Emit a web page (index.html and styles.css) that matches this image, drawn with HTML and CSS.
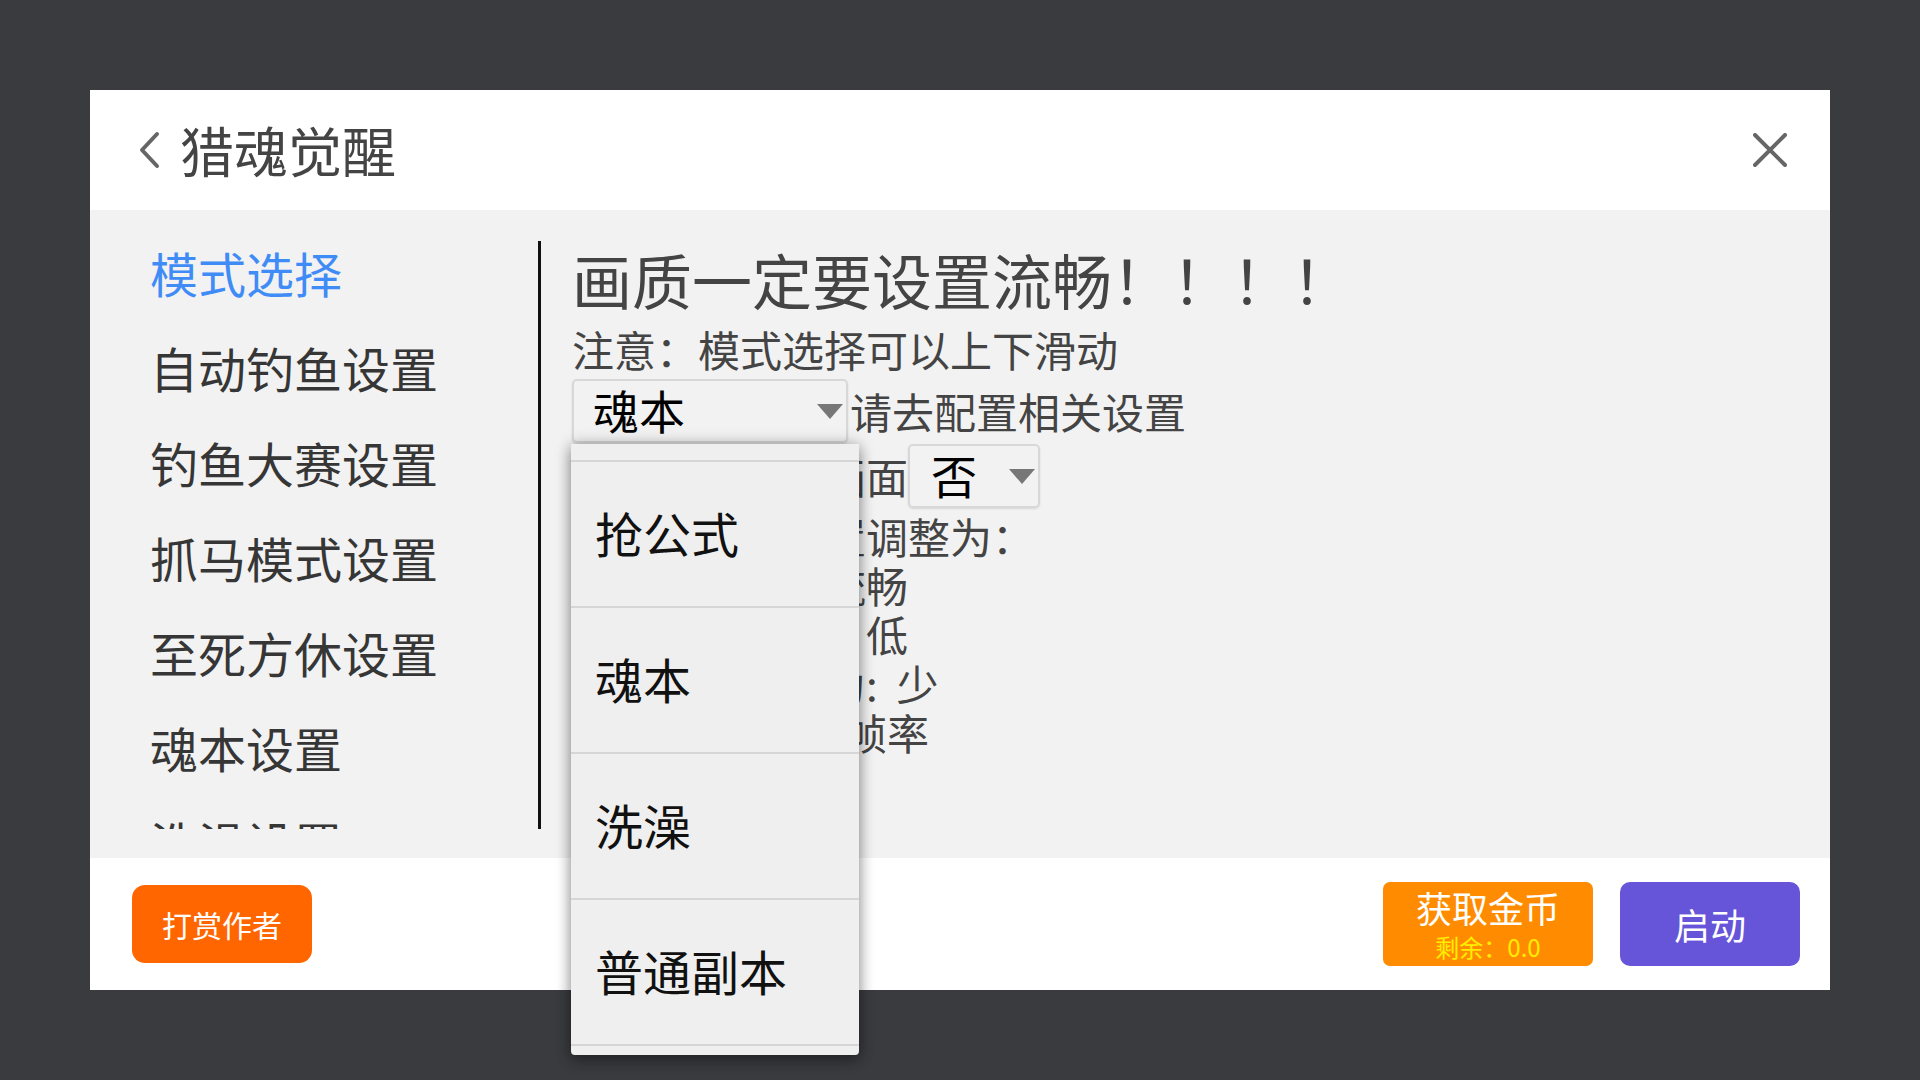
FILE: index.html
```html
<!DOCTYPE html>
<html lang="zh-CN">
<head>
<meta charset="utf-8">
<title>猎魂觉醒</title>
<link rel="stylesheet" href="styles.css">
</head>
<body>
<div class="screen">
  <div class="dialog">
    <header class="dlg-header">
      <svg class="back" width="22" height="38" viewBox="0 0 22 38"><path d="M19 3 L4 19 L19 35" fill="none" stroke="#666" stroke-width="4" stroke-linecap="round" stroke-linejoin="round"/></svg>
      <h1 class="dlg-title">猎魂觉醒</h1>
      <svg class="close" width="34" height="34" viewBox="0 0 34 34"><path d="M2 2 L32 32 M32 2 L2 32" fill="none" stroke="#666" stroke-width="4" stroke-linecap="round"/></svg>
    </header>
    <section class="dlg-body">
      <nav class="menu">
        <div class="menu-item active">模式选择</div>
        <div class="menu-item">自动钓鱼设置</div>
        <div class="menu-item">钓鱼大赛设置</div>
        <div class="menu-item">抓马模式设置</div>
        <div class="menu-item">至死方休设置</div>
        <div class="menu-item">魂本设置</div>
        <div class="menu-item">洗澡设置</div>
      </nav>
      <div class="vline"></div>
      <div class="main">
        <div class="title">画质一定要设置流畅！！！！</div>
        <div class="note">注意：模式选择可以上下滑动</div>
        <div class="row">
          <div class="select-wrap">
            <div class="select sel-mode"><span class="sel-text">魂本</span><i class="caret"></i></div>
            <ul class="popup">
              <li class="pop-item">抢公式</li>
              <li class="pop-item">魂本</li>
              <li class="pop-item">洗澡</li>
              <li class="pop-item">普通副本</li>
            </ul>
          </div>
          <span class="row-text">请去配置相关设置</span>
        </div>
        <div class="row row2">
          <span class="row-label">是否隐藏游戏画面</span>
          <div class="select sel-yn"><span class="sel-text">否</span><i class="caret"></i></div>
        </div>
        <div class="lines">
          <div>建议将画质设置调整为：</div>
          <div>画质设置为：流畅</div>
          <div>分辨率设置为：低</div>
          <div>特效数量设置为:&nbsp; 少</div>
          <div>画面刷新设置: 帧率</div>
        </div>
      </div>
    </section>
    <footer class="dlg-footer">
      <button class="btn btn-tip">打赏作者</button>
      <button class="btn btn-gold"><span class="gold-main">获取金币</span><span class="gold-sub">剩余：0.0</span></button>
      <button class="btn btn-start">启动</button>
    </footer>
  </div>
</div>
</body>
</html>
```
FILE: styles.css
```css
* { box-sizing: border-box; }
html, body { margin: 0; padding: 0; }
body {
  background: #3a3b3f;
  font-family: "Noto Sans CJK SC", "Noto Sans", sans-serif;
}
.screen {
  width: 1920px;
  height: 1080px;
  display: flex;
  align-items: center;
  justify-content: center;
}
.dialog {
  width: 1740px;
  height: 900px;
  display: flex;
  flex-direction: column;
  background: #fff;
}
.dlg-header {
  height: 120px;
  flex: none;
  display: flex;
  align-items: center;
  padding: 0 43px 0 48px;
  background: #fff;
}
.back { flex: none; }
.dlg-title {
  margin: 0 0 0 20px;
  font-size: 54px;
  font-weight: 400;
  color: #444;
  line-height: 60px;
  flex: 1;
}
.close { flex: none; }

.dlg-body {
  height: 648px;
  flex: none;
  display: flex;
  background: #f2f2f2;
  padding-bottom: 29px;
}
.menu {
  width: 448px;
  flex: none;
  padding: 15px 0 0 60px;
  overflow: hidden;
}
.menu-item {
  font-size: 48px;
  line-height: 95px;
  height: 95px;
  color: #363636;
  white-space: nowrap;
}
.menu-item.active { color: #3f8cf6; }
.vline {
  width: 3px;
  flex: none;
  background: #111;
  margin-top: 31px;
}
.main {
  flex: 1;
  padding-left: 31px;
  color: #444;
}
.title {
  margin-top: 29px;
  font-size: 60px;
  line-height: 80px;
  white-space: nowrap;
}
.note {
  font-size: 42px;
  line-height: 60px;
  white-space: nowrap;
}
.row {
  height: 64px;
  display: flex;
  align-items: center;
  font-size: 42px;
  white-space: nowrap;
}
.row2 { margin-top: 1px; }
.select-wrap { position: relative; height: 64px; }
.select {
  height: 64px;
  border: 2px solid #d8d8d8;
  border-radius: 5px;
  box-shadow: 0 1px 2px rgba(0,0,0,0.12);
  display: flex;
  align-items: center;
  color: #000;
  font-size: 46px;
  padding-bottom: 4px;
}
.sel-mode { width: 276px; padding-left: 19px; padding-right: 3px; }
.sel-yn { width: 132px; padding-left: 21px; padding-right: 3px; }
.sel-text { flex: 1; line-height: 56px; }
.caret {
  width: 0;
  height: 0;
  border-left: 13px solid transparent;
  border-right: 13px solid transparent;
  border-top: 15px solid #777;
  margin-top: 4px;
}
.row-text { margin-left: 2px; line-height: 64px; }
.row-label { line-height: 64px; }
.lines {
  margin-top: 3px;
  font-size: 42px;
  line-height: 49px;
  white-space: nowrap;
}

.popup {
  position: absolute;
  left: -1px;
  top: calc(100% + 1px);
  width: 288px;
  margin: 0;
  padding: 16px 0 9px;
  list-style: none;
  background: #efefef;
  border-radius: 0 0 4px 4px;
  box-shadow: 0 6px 14px rgba(0,0,0,0.3), 0 0 16px rgba(0,0,0,0.25);
  z-index: 5;
}
.pop-item {
  height: 146px;
  border-top: 2px solid #d6d6d6;
  padding-left: 24px;
  padding-bottom: 4px;
  font-size: 48px;
  line-height: 140px;
  color: #111;
}
.pop-item:last-child { height: 148px; border-bottom: 2px solid #d6d6d6; }

.dlg-footer {
  height: 132px;
  flex: none;
  display: flex;
  align-items: center;
  padding: 0 30px 0 42px;
  background: #fff;
}
.btn {
  border: none;
  margin: 0;
  padding: 0;
  font-family: inherit;
  color: #fff;
  cursor: pointer;
}
.btn-tip {
  width: 180px;
  height: 78px;
  background: #ff6600;
  border-radius: 13px;
  font-size: 30px;
  line-height: 78px;
  margin-right: auto;
}
.btn-gold {
  width: 210px;
  height: 84px;
  background: #ff8c00;
  border-radius: 7px;
  display: flex;
  flex-direction: column;
  align-items: center;
  padding-top: 4px;
}
.gold-main { font-size: 36px; line-height: 42px; }
.gold-sub { font-size: 24px; line-height: 38px; color: #ffee00; }
.btn-start {
  width: 180px;
  height: 84px;
  margin-left: 27px;
  background: #6655d9;
  border-radius: 10px;
  font-size: 36px;
  line-height: 84px;
}
```
